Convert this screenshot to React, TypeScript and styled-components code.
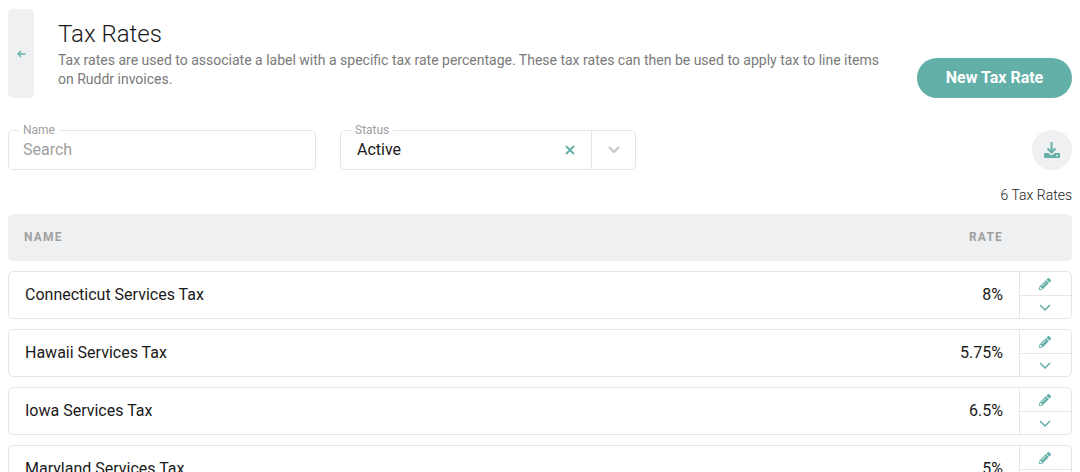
import React from "react";
import styled, { createGlobalStyle } from "styled-components";
import { FaPencilAlt } from "react-icons/fa";

const Global = createGlobalStyle`
  html, body { margin: 0; padding: 0; height: 472px; overflow: hidden; background: #fff; }
  body { font-family: Roboto, "Liberation Sans", sans-serif; color: #1a1a1a; }
  * { box-sizing: border-box; }
`;
const teal = "#63b0a8";
const border = "#e6e6e6";

const Page = styled.div`
  padding: 9px 8px 0;
`;
const Header = styled.header`
  display: flex;
  align-items: stretch;
  height: 89px;
`;
const BackButton = styled.button`
  width: 26px;
  padding: 0;
  border: 0;
  border-radius: 5px;
  background: #eff0f2;
  display: flex;
  align-items: center;
  justify-content: center;
  color: ${teal};
`;
const HeaderText = styled.div`
  margin-left: 24px;
  flex: 1;
  padding-top: 10px;
`;
const Title = styled.h1`
  margin: 0;
  font-size: 24px;
  font-weight: 300;
  line-height: 30px;
  color: #1a1a1a;
`;
const Description = styled.p`
  margin: 2px 0 0;
  width: 830px;
  font-size: 14px;
  line-height: 19px;
  color: #7a7a7a;
`;
const PrimaryButton = styled.button`
  align-self: flex-end;
  width: 155px;
  height: 40px;
  padding: 0 0 2px;
  border: 0;
  border-radius: 20px;
  background: ${teal};
  color: #fff;
  font-family: inherit;
  font-size: 16px;
  font-weight: 700;
`;
const Filters = styled.div`
  margin-top: 32px;
  display: flex;
  gap: 24px;
  align-items: center;
`;
const Field = styled.div<{ $width: number }>`
  position: relative;
  width: ${(p) => p.$width}px;
  height: 40px;
  border: 1px solid ${border};
  border-radius: 5px;
  display: flex;
  align-items: center;
`;
const FieldLabel = styled.label`
  position: absolute;
  left: 10px;
  top: -8px;
  padding: 0 4px;
  background: #fff;
  font-size: 12px;
  line-height: 14px;
  color: #a0a0a0;
`;
const FieldValue = styled.span<{ $muted?: boolean }>`
  flex: 1;
  padding: 0 ${(p) => (p.$muted ? 14 : 16)}px 2px;
  font-size: 16px;
  color: ${(p) => (p.$muted ? "#a0a0a0" : "#1a1a1a")};
`;
const ClearIcon = styled.span`
  width: 44px;
  padding-left: 2px;
  display: flex;
  justify-content: center;
  color: ${teal};
`;
const ArrowCell = styled.span`
  width: 44px;
  height: 100%;
  padding-bottom: 2px;
  border-left: 1px solid ${border};
  display: flex;
  align-items: center;
  justify-content: center;
`;
const IconCircle = styled.button`
  margin-left: auto;
  width: 40px;
  height: 40px;
  padding: 0;
  border: 0;
  border-radius: 50%;
  background: #eff0f2;
  color: ${teal};
  display: flex;
  align-items: center;
  justify-content: center;
`;
const Count = styled.div`
  margin-top: 17px;
  text-align: right;
  font-size: 14px;
  font-weight: 300;
  line-height: 16px;
  color: #1a1a1a;
`;
const TableHead = styled.div`
  margin-top: 11px;
  height: 47px;
  background: #eff0f2;
  border-radius: 5px;
  display: flex;
  align-items: center;
  justify-content: space-between;
  padding: 0 69px 2px 16px;
  font-size: 12px;
  font-weight: 700;
  letter-spacing: 1.2px;
  color: #a0a0a0;
`;
const Rows = styled.div`
  margin-top: 10px;
  display: flex;
  flex-direction: column;
  gap: 10px;
`;
const Row = styled.div`
  flex: none;
  height: 48px;
  border: 1px solid ${border};
  border-radius: 5px;
  display: flex;
  align-items: center;
`;
const RowName = styled.span`
  flex: 1;
  padding: 0 0 2px 16px;
  font-size: 16px;
  color: #1a1a1a;
`;
const RowRate = styled.span`
  padding: 0 16px 2px 0;
  font-size: 16px;
  font-weight: 400;
  color: #1a1a1a;
`;
const RowActions = styled.div`
  width: 52px;
  height: 100%;
  border-left: 1px solid ${border};
  display: grid;
  grid-template-rows: 1fr 1fr;
`;
const ActionCell = styled.span`
  display: flex;
  align-items: center;
  justify-content: center;
  padding-right: 1px;
  color: ${teal};
  & + & {
    border-top: 1px solid ${border};
  }
`;

const Chevron = ({ color, weight }: { color: string; weight: number }) => (
  <svg width="12" height="7" viewBox="0 0 12 7" fill="none">
    <path d="M1 1l5 5 5-5" stroke={color} strokeWidth={weight} />
  </svg>
);

const DownloadIcon = () => (
  <svg width="16" height="16" viewBox="0 0 16 16" fill="none">
    <path d="M7.5 0v10M3.5 6.5l4 4 4-4" stroke={teal} strokeWidth="2" />
    <path
      d="M1 11h3l3.5 2.5L11 11h4a1 1 0 0 1 1 1v3a1 1 0 0 1-1 1H1a1 1 0 0 1-1-1v-3a1 1 0 0 1 1-1z"
      fill={teal}
    />
    <circle cx="13" cy="13.7" r="0.9" fill="#eff0f2" />
  </svg>
);

const rows = [
  ["Connecticut Services Tax", "8%"],
  ["Hawaii Services Tax", "5.75%"],
  ["Iowa Services Tax", "6.5%"],
  ["Maryland Services Tax", "5%"],
];

export default function App() {
  return (
    <Page>
      <Global />
      <Header>
        <BackButton aria-label="Back">
          <svg width="9" height="8" viewBox="0 0 9 8" fill="none">
            <path d="M8.5 4H1M4 1L1 4l3 3" stroke={teal} strokeWidth="1.3" />
          </svg>
        </BackButton>
        <HeaderText>
          <Title>Tax Rates</Title>
          <Description>
            Tax rates are used to associate a label with a specific tax rate percentage. These tax rates can then be
            used to apply tax to line items on Ruddr invoices.
          </Description>
        </HeaderText>
        <PrimaryButton>New Tax Rate</PrimaryButton>
      </Header>
      <Filters>
        <Field $width={308}>
          <FieldLabel>Name</FieldLabel>
          <FieldValue $muted>Search</FieldValue>
        </Field>
        <Field $width={296}>
          <FieldLabel>Status</FieldLabel>
          <FieldValue>Active</FieldValue>
          <ClearIcon>
            <svg width="10" height="10" viewBox="0 0 10 10" fill="none">
              <path d="M1 1l8 8M9 1L1 9" stroke={teal} strokeWidth="1.8" />
            </svg>
          </ClearIcon>
          <ArrowCell>
            <Chevron color="#c9c9c9" weight={2.4} />
          </ArrowCell>
        </Field>
        <IconCircle aria-label="Export">
          <DownloadIcon />
        </IconCircle>
      </Filters>
      <Count>6 Tax Rates</Count>
      <TableHead>
        <span>NAME</span>
        <span>RATE</span>
      </TableHead>
      <Rows>
        {rows.map(([name, rate]) => (
          <Row key={name}>
            <RowName>{name}</RowName>
            <RowRate>{rate}</RowRate>
            <RowActions>
              <ActionCell>
                <FaPencilAlt size={12} />
              </ActionCell>
              <ActionCell>
                <Chevron color={teal} weight={1.5} />
              </ActionCell>
            </RowActions>
          </Row>
        ))}
      </Rows>
    </Page>
  );
}
